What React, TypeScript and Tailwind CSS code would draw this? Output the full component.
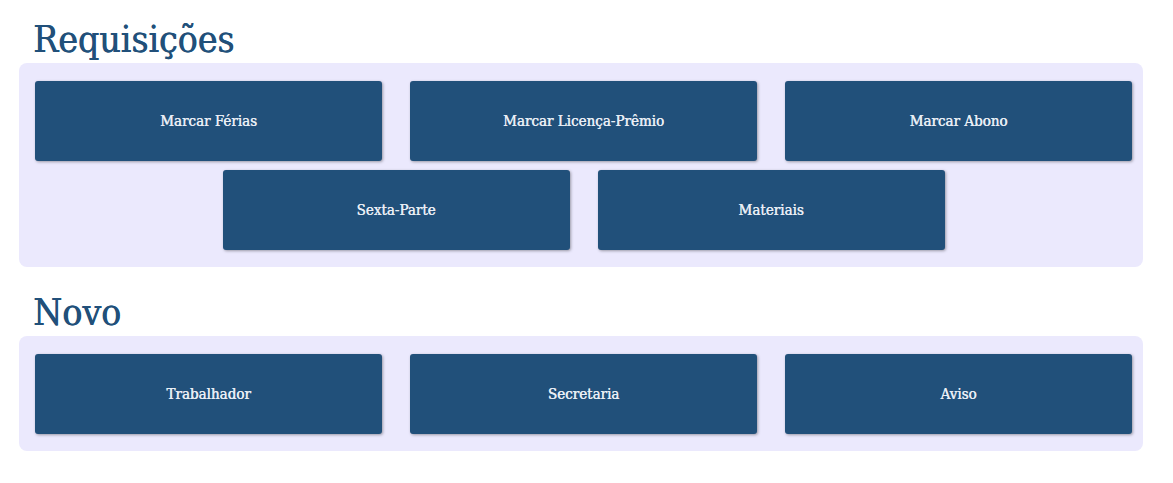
import React from 'react';

const serif = { fontFamily: '"DejaVu Serif Condensed", "DejaVu Serif", serif' };

const ActionButton: React.FC<{ label: string }> = ({ label }) => (
  <button
    className="w-[347px] h-[80px] rounded-[3px] bg-[#21507a] text-[#e9eef5] text-[15px] font-normal shadow-[1px_1px_3px_rgba(0,0,0,0.35)] flex items-center justify-center [text-shadow:0.4px_0_0_#e9eef5]"
    style={serif}
  >
    {label}
  </button>
);

const Section: React.FC<{ title: string; items: string[] }> = ({ title, items }) => (
  <section>
    <h2 className="text-[37px] leading-[44px] text-[#21507a] pl-[33px] [text-shadow:0.6px_0_0_#21507a]" style={serif}>
      {title}
    </h2>
    <div className="ml-[19px] mr-[30px] mt-[1px] rounded-lg bg-[#ebe9fd] pt-[18px] pb-[17px] pl-[16px] pr-[11px] flex flex-wrap justify-center gap-x-[28px] gap-y-[9px]">
      {items.map((it) => (
        <ActionButton key={it} label={it} />
      ))}
    </div>
  </section>
);

export default function App() {
  return (
    <div className="w-[1173px] h-[483px] bg-white pt-[18px] flex flex-col gap-[24px]">
      <Section
        title="Requisições"
        items={['Marcar Férias', 'Marcar Licença-Prêmio', 'Marcar Abono', 'Sexta-Parte', 'Materiais']}
      />
      <Section title="Novo" items={['Trabalhador', 'Secretaria', 'Aviso']} />
    </div>
  );
}
